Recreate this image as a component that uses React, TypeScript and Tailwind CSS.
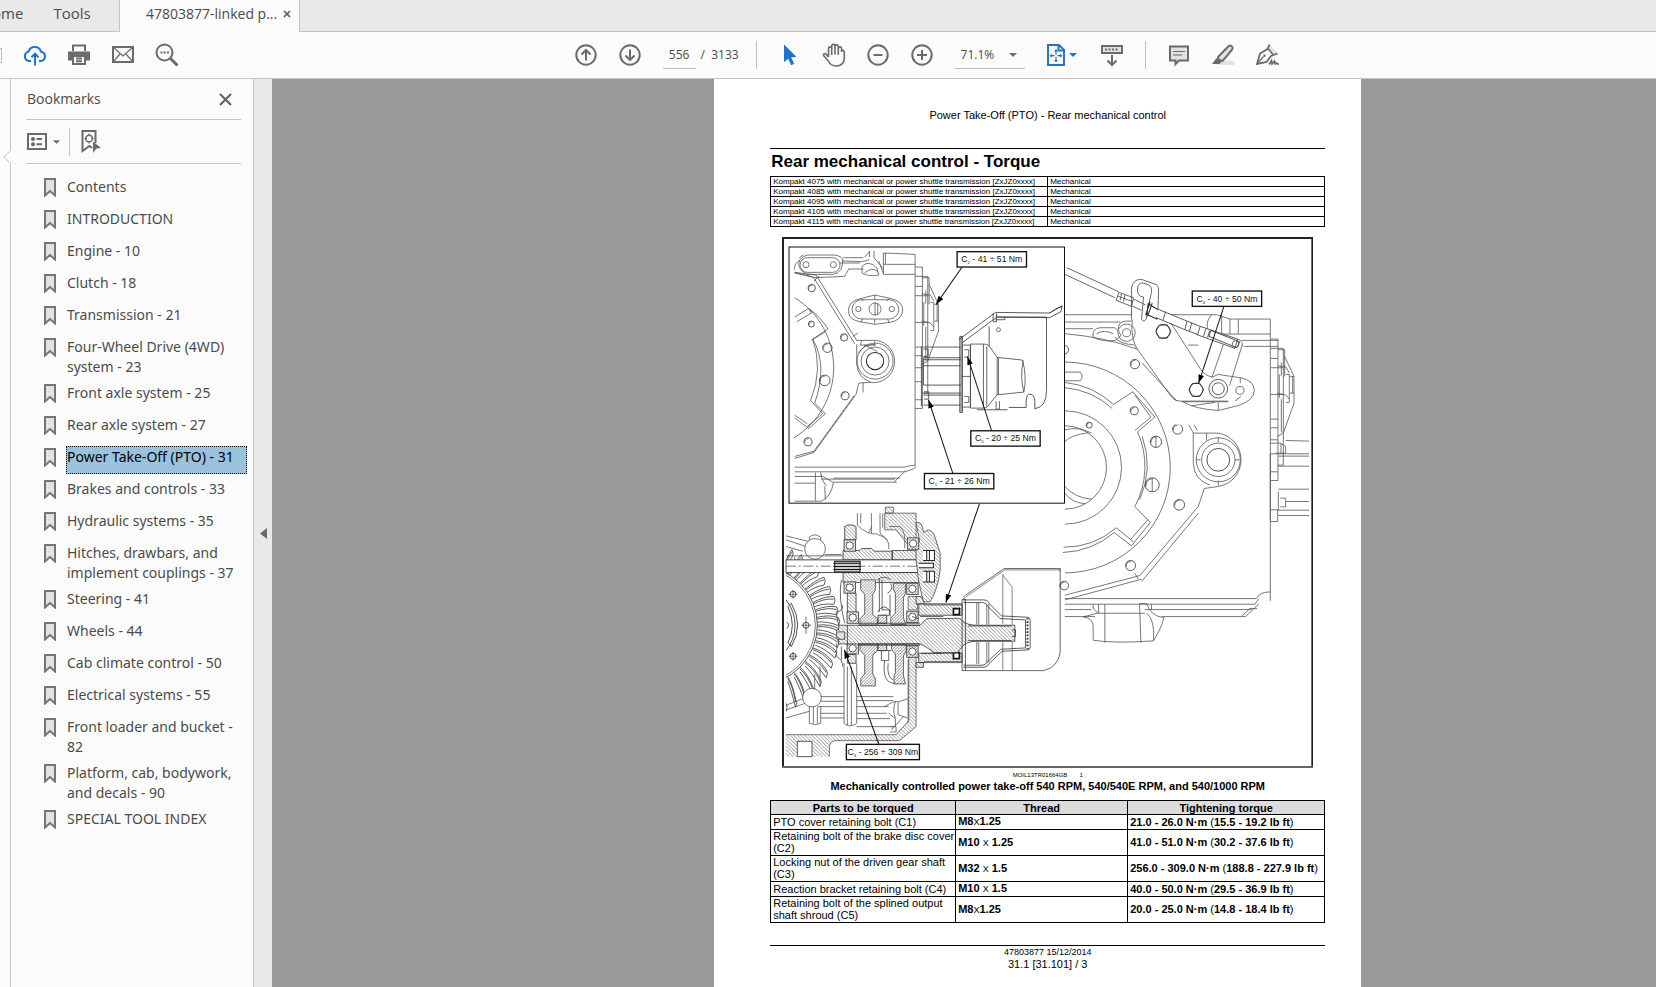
import { useState } from "react";
import type { ReactNode } from "react";

const bookmarks = [
  "Contents",
  "INTRODUCTION",
  "Engine - 10",
  "Clutch - 18",
  "Transmission - 21",
  "Four-Wheel Drive (4WD) system - 23",
  "Front axle system - 25",
  "Rear axle system - 27",
  "Power Take-Off (PTO) - 31",
  "Brakes and controls - 33",
  "Hydraulic systems - 35",
  "Hitches, drawbars, and implement couplings - 37",
  "Steering - 41",
  "Wheels - 44",
  "Cab climate control - 50",
  "Electrical systems - 55",
  "Front loader and bucket - 82",
  "Platform, cab, bodywork, and decals - 90",
  "SPECIAL TOOL INDEX",
];

const models = ["4075", "4085", "4095", "4105", "4115"];

const torques = [
  { part: "PTO cover retaining bolt (C1)", thread: ["M8", "1.25"], nm: "21.0 - 26.0 N·m", lb: "15.5 - 19.2 lb ft" },
  { part: "Retaining bolt of the brake disc cover (C2)", thread: ["M10 ", " 1.25"], nm: "41.0 - 51.0 N·m", lb: "30.2 - 37.6 lb ft" },
  { part: "Locking nut of the driven gear shaft (C3)", thread: ["M32 ", " 1.5"], nm: "256.0 - 309.0 N·m", lb: "188.8 - 227.9 lb ft" },
  { part: "Reaction bracket retaining bolt (C4)", thread: ["M10 ", " 1.5"], nm: "40.0 - 50.0 N·m", lb: "29.5 - 36.9 lb ft" },
  { part: "Retaining bolt of the splined output shaft shroud (C5)", thread: ["M8", "1.25"], nm: "20.0 - 25.0 N·m", lb: "14.8 - 18.4 lb ft" },
];

function IconButton({ label, children }: { label: string; children: ReactNode }) {
  return (
    <button type="button" aria-label={label} className="flex h-6 w-[22px] shrink-0 items-center justify-center text-[#6b6b6b]">
      <svg viewBox="0 0 24 24" className="h-6 w-6 shrink-0" fill="none" stroke="currentColor" strokeWidth="2">
        {children}
      </svg>
    </button>
  );
}

function Caret({ className }: { className: string }) {
  return (
    <svg viewBox="0 0 8 4" className={className} fill="currentColor">
      <path d="M0 0h8L4 4z" />
    </svg>
  );
}

function BookmarkGlyph() {
  return (
    <svg viewBox="0 0 12 19" className="h-[19px] w-3 shrink-0" fill="#e2e2e2" stroke="#757575" strokeWidth="2">
      <path d="M1 1h10v16.5L6 13l-5 4.500z" />
    </svg>
  );
}

function TabBar() {
  return (
    <div className="flex h-8 shrink-0 bg-[#e9e9e9] text-[15px] text-[#4b4b4b]">
      <nav className="flex h-full w-[120px] shrink-0 items-center gap-[30px] overflow-hidden border-r border-b border-[#c4c4c4] pb-1">
        <a href="#home" className="-ml-[19px]">Home</a>
        <a href="#tools">Tools</a>
      </nav>
      <div className="flex w-[179px] shrink-0 items-center justify-between bg-[#fbfbfb] pr-2 pb-1 pl-[26px] text-sm">
        <a href="#document" className="whitespace-nowrap">47803877-linked p...</a>
        <button type="button" aria-label="Close tab">
          <svg viewBox="0 0 8 8" className="h-2 w-2" stroke="#5f5f5f" strokeWidth="1.700">
            <path d="M1 1l6 6M7 1L1 7" />
          </svg>
        </button>
      </div>
      <div className="flex-1 border-b border-l border-[#c4c4c4]" />
    </div>
  );
}

function Toolbar() {
  const [page, setPage] = useState("556");

  return (
    <div className="flex h-[47px] shrink-0 items-center border-b border-[#c4c4c4] bg-[#fbfbfb] text-xs text-[#4b4b4b]">
      <div className="flex flex-[41] items-center gap-[22px]">
        <span className="h-[15px] w-[2px] border border-l-0 border-[#bdbdbd]" />
        <IconButton label="Upload">
          <g stroke="#1f74c9">
            <path d="M8 18H6.200A4.800 4.800 0 0 1 5.500 8.600 6.500 6.500 0 0 1 18 8.700a4.700 4.700 0 0 1-.2 9.300H16" />
            <path d="M12 22.500V11M8.500 14.200L12 10.700l3.500 3.500" />
          </g>
        </IconButton>
        <IconButton label="Print">
          <path d="M6 8V2.500h12V8" />
          <path d="M1 8.500h22v9H18v-4H6v4H1z" fill="currentColor" stroke="none" />
          <path d="M6 13v8h12v-8zM9 15.500h6M9 18.200h6" />
        </IconButton>
        <IconButton label="Send by email">
          <path d="M2 4h20v15H2z" />
          <path d="M2.500 4.500L12 13l9.500-8.500M2.500 18.500L9 11M21.500 18.500L15 11" strokeWidth="1.200" />
        </IconButton>
        <IconButton label="Find">
          <circle cx="9.500" cy="9.500" r="8" />
          <path d="M15.500 15.500L22.500 22.500" strokeWidth="3" />
          <path d="M5.500 9.500h2M8.700 9.500h2M12 9.500h2" />
        </IconButton>
      </div>

      <div className="flex shrink-0 items-center gap-[22px]">
        <IconButton label="Previous page">
          <circle cx="12" cy="12" r="9.700" />
          <path d="M12 17.500V7M7.500 11.500L12 7l4.500 4.500" />
        </IconButton>
        <IconButton label="Next page">
          <circle cx="12" cy="12" r="9.700" />
          <path d="M12 6.500V17M7.500 12.500L12 17l4.500-4.500" />
        </IconButton>
        <div className="flex w-[71px] items-center gap-[5px] whitespace-nowrap">
          <input
            aria-label="Page number"
            value={page}
            onChange={(e) => setPage(e.target.value)}
            className="h-7 w-[33px] shrink-0 border-b border-[#bdbdbd] bg-transparent text-center outline-none"
          />
          <span>/&nbsp; 3133</span>
        </div>
        <span className="h-7 w-px bg-[#bdbdbd]" />
        <IconButton label="Select">
          <path d="M6 1.500v17.800l4.200-3.600 3 6.500 3-1.400-3-6.200 5.200-.8z" fill="#1f74c9" stroke="none" />
        </IconButton>
        <IconButton label="Pan">
          <path
            strokeWidth="1.600"
            strokeLinejoin="round"
            d="M6.500 14V5.500a1.500 1.500 0 0 1 3.200 0V12M9.700 5.500V3a1.600 1.600 0 0 1 3.300 0v8.500M13 3.500a1.600 1.600 0 0 1 3.300 0V12M16.300 5.500a1.600 1.600 0 0 1 3.300 0V9M19.600 8a1.500 1.500 0 0 1 2.700.8V15c0 5-3.500 8-8 8-4 0-6.500-2-8-5L1.600 12.500c-.6-1.600 1.500-2.500 2.600-1.200L6.500 14"
          />
        </IconButton>
        <IconButton label="Zoom out">
          <circle cx="12" cy="12" r="9.700" />
          <path d="M7.500 12h9" />
        </IconButton>
        <IconButton label="Zoom in">
          <circle cx="12" cy="12" r="9.700" />
          <path d="M7 12h10M12 7v10" />
        </IconButton>
        <div className="relative w-[70px]">
          <select aria-label="Zoom level" className="h-7 w-full appearance-none border-b border-[#bdbdbd] bg-transparent pl-[6px] outline-none">
            <option>71.1%</option>
            <option>100%</option>
          </select>
          <Caret className="pointer-events-none absolute top-3 right-2 h-1 w-2 text-[#6b6b6b]" />
        </div>
        <button type="button" aria-label="Fit page" className="flex w-8 items-center gap-1 text-[#1f74c9]">
          <svg viewBox="0 0 18 22" className="h-[22px] w-[18px]" fill="none" stroke="currentColor" strokeWidth="2">
            <path d="M1 1h11l5 5v15H1z" />
            <path d="M11.500 1v5.500H17" />
            <path d="M9 6.500v4M9 13v4M3.500 11.700h4M10.500 11.700h4" strokeWidth="1.200" />
            <path d="M9 5l-2 2.500h4zM9 18.500L7 16h4zM2.500 11.700L5 9.700v4zM15.500 11.700l-2.500-2v4z" fill="currentColor" stroke="none" />
          </svg>
          <Caret className="h-1 w-2" />
        </button>
        <IconButton label="Scrolling mode">
          <path d="M2 3h20v7H2z" fill="#e2e2e2" />
          <path d="M5 6.500h2M8.500 6.500h2M12 6.500h2M15.500 6.500h2" />
          <path d="M12 12v10M7.500 17.500L12 22l4.500-4.500" />
        </IconButton>
        <span className="h-7 w-px bg-[#bdbdbd]" />
        <IconButton label="Comment">
          <path d="M3 3.500h18v14h-9L8.500 21v-3.500H3z" fill="#e2e2e2" />
          <path d="M6 8.500h12M6 12h9" strokeWidth="1.200" />
        </IconButton>
        <IconButton label="Highlight">
          <path d="M9 18h14v4H6z" fill="#e2e2e2" stroke="none" />
          <path d="M7 14L17.500 3.300c1.500-1.500 4.500-.5 4 2.200-.1.700-.4 1.100-.8 1.600L12 17.500c-2 1-5.500-1-5-3.500z" fill="#e2e2e2" />
          <path d="M5.500 15l5 4-2 2H1z" fill="currentColor" stroke="none" />
        </IconButton>
        <IconButton label="Sign">
          <path d="M13 6l2-4 7.500 8-4.500 2z" fill="#e2e2e2" stroke="none" />
          <path d="M14.500 1.500l-2 4.500L5 10.500 2 21l9.500-2 4.500-6 6.500-2.500" strokeWidth="1.800" />
          <path d="M13 5.500l5 6" strokeWidth="1.600" />
          <path d="M2 21l6.500-7.500" strokeWidth="1.200" />
          <circle cx="9.500" cy="12.800" r="1.200" fill="currentColor" stroke="none" />
          <path d="M14 21.500l2.500-4 .5 3.500 2.500-3 .5 3 1.500-1 1 1h1.500" strokeWidth="1.600" />
        </IconButton>
      </div>
      <div className="flex-[27]" />
    </div>
  );
}

function Sidebar() {
  const [selected, setSelected] = useState(8);

  return (
    <div className="flex shrink-0 bg-[#fbfbfb] text-sm text-[#4b4b4b]">
      <div className="w-[10px] pt-[71px]">
        <svg viewBox="0 0 9 14" className="relative left-[3px] h-[14px] w-[9px]" fill="#fbfbfb" stroke="#c4c4c4">
          <path d="M8 0L1 7l7 7" />
        </svg>
      </div>
      <aside className="w-[244px] border-x border-[#c4c4c4] pl-[15px]">
        <div className="mr-3 flex h-[41px] items-center justify-between border-b border-[#c4c4c4] pr-[9px] pl-px">
          <h2>Bookmarks</h2>
          <button type="button" aria-label="Close bookmarks">
            <svg viewBox="0 0 13 13" className="h-[13px] w-[13px]" stroke="#5f5f5f" strokeWidth="2">
              <path d="M1 1l11 11M12 1L1 12" />
            </svg>
          </button>
        </div>
        <div className="mr-3 flex h-11 items-center border-b border-[#c4c4c4] pl-px">
          <button type="button" aria-label="Options" className="flex w-[42px] items-center gap-[6px] text-[#6b6b6b]">
            <svg viewBox="0 0 20 17" className="h-[17px] w-5" fill="none" stroke="currentColor" strokeWidth="2">
              <path d="M1 1h18v15H1z" />
              <path d="M9.500 6H15M9.500 11.200H15" />
              <circle cx="6" cy="6" r="2" fill="currentColor" stroke="none" />
              <circle cx="6" cy="11.200" r="2" fill="currentColor" stroke="none" />
            </svg>
            <Caret className="h-1 w-[7px]" />
          </button>
          <span className="h-7 w-px bg-[#c4c4c4]" />
          <button type="button" aria-label="Find current bookmark" className="ml-[11px] text-[#6b6b6b]">
            <svg viewBox="0 0 20 23" className="h-[23px] w-5" fill="none" stroke="currentColor" strokeWidth="2">
              <path d="M11 18l-2.500-2L1.500 21V1h13v12" />
              <circle cx="8" cy="8.500" r="3.300" strokeWidth="1.400" />
              <path d="M8 3.500v2.500M8 11v2.500M3.500 8.500H6M10.500 8.500H13" strokeWidth="1.200" />
              <path d="M12 11.500l8 6.500-4.500.5L12 23z" fill="currentColor" stroke="none" />
            </svg>
          </button>
        </div>
        <ul className="pt-[11px] pl-[18px] font-['Noto_Sans',sans-serif]">
          {bookmarks.map((name, i) => (
            <li key={name} className="flex min-h-8 items-start gap-[10px] pt-[2px]">
              <span className="pt-px">
                <BookmarkGlyph />
              </span>
              <button
                type="button"
                onClick={() => setSelected(i)}
                className={
                  i === selected
                    ? "-mt-px w-[181px] border border-dotted border-black bg-[#9bc2dd] pb-[6px] text-left leading-5 whitespace-nowrap text-black"
                    : "w-[180px] border-x border-transparent pb-1 text-left leading-5"
                }
              >
                {name}
              </button>
            </li>
          ))}
        </ul>
      </aside>
      <button type="button" aria-label="Collapse panel" className="flex w-[18px] items-center justify-center bg-[#e9e9e9]">
        <svg viewBox="0 0 7 11" className="h-[11px] w-[7px]" fill="#6b6b6b">
          <path d="M7 0v11L0 5.500z" />
        </svg>
      </button>
    </div>
  );
}

function Callout({ x, y, w, sub, text }: { x: number; y: number; w: number; sub: string; text: string }) {
  return (
    <g>
      <rect x={x} y={y} width={w} height="46" fill="#fff" stroke="#111" strokeWidth="4" />
      <text x={x + w / 2} y={y + 32} textAnchor="middle" fontSize="26" fill="#111" stroke="none">
        C
        <tspan fontSize="13" dy="6">{sub}</tspan>
        <tspan dy="-6"> - {text}</tspan>
      </text>
    </g>
  );
}

function Holes({ at }: { at: number[][] }) {
  return (
    <>
      {at.map(([x, y, r]) => (
        <g key={`${x}-${y}`}>
          <circle cx={x} cy={y} r={r} stroke="#333" />
          <path d={`M${x - r + 3} ${y + 3}a${r - 3} ${r - 3} 0 0 1 ${r - 2} ${-r}`} />
        </g>
      ))}
    </>
  );
}

function Bearing({ x, y }: { x: number; y: number }) {
  return (
    <g>
      <rect x={x} y={y} width="34" height="34" fill="url(#hatchDark)" stroke="#333" />
      <circle cx={x + 17} cy={y + 17} r="11" fill="#fff" stroke="#333" />
    </g>
  );
}

// side cover with the bolts, used on the housing and again in the inset
function SideCover() {
  return (
    <g>
      <path d="M0 60h22v424H0M22 88h16v350H22M0 88h22M0 118h22M0 146h38M0 226h38M0 300h22M0 326h22M0 362h22M0 404h22M0 458h22" />
      <path d="M22 92h20v20l28 60v80l-32 90-18 10M42 112v60M46 166h10v84H46M26 166v70M32 130v40M32 240v100M58 172h12M58 222h12" />
      <path d="M20 140l26 4 10 18M20 222l26 6 10 12M66 172v50" />
    </g>
  );
}

// rear view of the gearbox housing with the reaction bracket
function Housing() {
  return (
    <g transform="translate(840 0)">
      <path d="M30 255h455l40 13h121v845M30 277h165M30 297h85M30 312q120 10 215 46M500 250v65M525 268v45M550 268v45M500 313h146M400 346h30M560 332h110M560 350h110M470 255q-20 20-10 50" />
      <path d="M115 322q-5-25 20-28h45q15 10 18 24l-16 14q-40 6-67-10zM125 312q22-14 50 0M190 300q0-26 24-26h28M180 322q10 20 60 24" />
      <path d="M30 397a316 316 0 0 1 0 632M30 543a170 170 0 0 1 0 340M30 588a125 125 0 0 1 0 250M30 600a112 112 0 0 1 80 10M30 635q20-20 70-26M30 770q30 34 80 38M30 790q20 28 60 32M30 427h46q12 13 0 26H30" />
      <path d="M30 458a255 255 0 0 1 146 66l58-38 66 76-52 44a255 255 0 0 1-8 224l46 48-56 70-52-40a255 255 0 0 1-154 60" />
      <path d="M30 474a240 240 0 0 1 142 62M240 496l48 66-48 40M262 620a255 255 0 0 1-8 190M236 936l-52-42a240 240 0 0 1-158 58M280 868l-52 60" />
      <path d="M240 350l125 165 50 95h75a81 81 0 0 1 0 160l-42 6-18 54-175 207L30 1096M252 345l123 162 52 95M415 610v90q2 50 50 66M490 752v16M455 632v-22M430 850l-170 205M240 1030l10 18M30 1110l230-62" />
      <circle cx="490" cy="690" r="66" />
      <circle cx="490" cy="690" r="50" />
      <circle cx="490" cy="690" r="34" stroke="#222" />
      <path d="M425 690h12M540 690h14M490 622v16" />
      <Holes at={[[240, 403, 14], [238, 543, 12], [368, 598, 15], [303, 636, 17], [292, 765, 21], [373, 825, 16], [103, 586, 9], [227, 1007, 15], [28, 1067, 13], [28, 360, 13]]} />
      <path d="M292 744v42M303 620v32" />
      {/* cable and bracket */}
      <path d="M230 270v-95q4-27 30-26l45 16q8 6 6 20v100l90 130h74l30-70q86-2 60 18l-38 122 24 12q50 8 48 42-2 30-50 46H368q-14 0-24-12L248 362q-24-32-18-92z" fill="#fff" stroke="none" />
      <path d="M36 114l155 72M30 134l150 70M192 188l44 16-6 26-46-18zM200 192l-4 20M210 196l-4 20M190 200l44 16M236 208l36 18M230 228l30 14" stroke="#444" />
      <path d="M230 270v-95q4-27 30-26l45 16q8 6 6 20l-2 60M248 178q0-18 16-18l18 6q10 6 8 22l-12 50-4 30q-8 12-14 0l6-66q-20-2-18-24z" stroke="#444" />
      <path d="M280 222l30 18-4 28-30-14zM286 216l-14 40M292 220l-14 40" stroke="#222" strokeWidth="3" />
      <path d="M308 238l88 36-6 26-86-36M332 246l-8 26M396 274l40 16-8 24-38-14M410 280l-6 24M436 290l112 38-8 28-116-42M452 298l-6 22M464 302l-6 22" fill="#fff" stroke="#333" />
      <path d="M468 302l86 34-8 18-84-34z" stroke="#222" />
      <circle cx="542" cy="343" r="10" />
      <circle cx="215" cy="309" r="12" />
      <circle cx="215" cy="309" r="26" />
      <path d="M232 270q-6 60 18 92l100 140q10 12 24 12h146M348 280l90 140M262 400l104 114M505 345l-34 98M562 345l-38 122M548 328q16 4 14 20M438 420q10 16 34 22l18-8 66 10q42 8 42 38t-50 46l-58 14q-70-4-106-26M380 516h140M556 444v16M490 518v24M410 528l70-10M540 514l18-14" />
      <circle cx="490" cy="477" r="28" stroke="#333" />
      <circle cx="490" cy="477" r="18" stroke="#333" />
      <circle cx="555" cy="482" r="12" />
      <path d="M303 305l10-19h24l11 19-11 20h-24zM402 480l10-19h23l11 19-11 20h-23z" stroke="#222" />
      <circle cx="325" cy="305" r="21" stroke="#222" />
      <circle cx="424" cy="480" r="20" stroke="#222" />
      <g transform="translate(647 268)">
        <SideCover />
      </g>
      <path d="M646 640h30l16 10v20h-30M692 632l70 2M670 672h92M670 679h92M670 709h92M670 778h92M670 785v55M646 840h24M646 875h22v-34h94M692 815h70M762 857h-92M678 640v30M646 672v200M676 805h16v26h-16" />
      {/* sump */}
      <path d="M30 1106h575q8-20 42-20M30 1123h570l12-16M30 1139h80M270 1139h320M30 1160h90M322 1160h250l40-38M560 1160l24-24h22M270 1150H130M115 1123q-4 16 16 26l-46 12q30 4 30 28v42q60 10 180 2 26-40 32-70-40-4-52-42h-22M131 1123v27M150 1123v115M254 1123l4 115M276 1150q24 20 20 82M290 1123v16" />
    </g>
  );
}

function Inset() {
  return (
    <g>
      <rect x="43" y="52" width="826" height="768" fill="#fff" stroke="#111" strokeWidth="3" />
      <path d="M60 120q-4-14 16-30 8-12 24-14h78q24 2 28 18l58 2 20-6M60 130l60 14 90-4 12-22h44M76 90q-14 24 20 44h80q30-6 28-44M86 76l-12 8M270 82l16-18M284 64v18M298 64v20l28 34M206 84h60M196 100h60M262 110q20-20 44 4l6 22q-30 6-50-6zM270 130q20-20 40-4M312 94l14 38M326 70l95 4M326 70v64h95M326 104h95M332 70v34M421 74v640" />
      <rect x="76" y="84" width="120" height="44" rx="22" />
      <circle cx="94" cy="105" r="9" />
      <circle cx="176" cy="105" r="9" />
      <path d="M60 128l64 8 122 196h60a62 62 0 0 1-20 126l-34 2-8 34-126 174-58 18M60 680l58-16 120-166M246 344v60q4 40 40 52M134 138l-16 16M234 320l16-10M262 332l-6 14h46M265 458v30M60 128l56 14 124 200M300 335v14M268 345l40 20" />
      <circle cx="301" cy="394" r="54" />
      <circle cx="301" cy="394" r="42" />
      <circle cx="301" cy="394" r="26" stroke="#222" strokeWidth="3" />
      <path d="M252 370q14-26 48-26" />
      <rect x="232" y="210" width="140" height="58" rx="29" />
      <path d="M222 250q-6-36 38-44l40-10 46 10q40 8 38 38-6 30-40 34l-44 6-44-8q-32-6-34-26zM300 196v14M300 268v14M258 206l8 8M344 206l-8 8M258 278l6-12M344 280l-6-12" />
      <circle cx="251" cy="238" r="8" />
      <circle cx="351" cy="238" r="8" />
      <circle cx="301" cy="238" r="18" />
      <path d="M301 218v40M309 220v36" />
      <path d="M60 204a246 246 0 0 1-2 420M60 262l42-26 8 14-44 26M102 236q34 24 58 62l-46 30q46 80 6 192l32 32-50 44-42-32M152 306l-42 26M114 328q32 90-6 184l36 40-46 38M60 556l38 26" />
      <Holes at={[[111, 175, 11], [110, 283, 9], [208, 323, 11], [158, 354, 14], [150, 452, 16], [211, 498, 12], [100, 636, 12]]} />
      <path d="M60 712h330q0-2 30-6M60 726h330l30-10M60 740h80M60 760h62M176 745h200M176 757h190M60 814h80q30-14 36-56l-38-22M138 728q0 20 16 40M122 728v84M150 770l2 40M358 757l34-34M140 748h220" />
      <g transform="translate(421 52)">
        <SideCover />
      </g>
      <path d="M446 352h112M446 384h112M446 390h112M446 408h112M446 466h112M446 490h112M446 496h112M446 526h112M446 358h14v22h-14M448 486h14v22h-14M440 350v180M446 384v82" stroke="#333" />
      <path d="M555 320h8v228h-8zM559 320v226" stroke="#333" />
      <path d="M552 330l110-82 162 2 38-22-4 18-34 18-158-2-102 76M655 250v26h10v-26M662 270h28v-8M643 290v60M665 262h150v220q0 50-35 55v-26q-4-20-18-18-10 4-8 40h-52M606 540h92M824 250q18-14 38-20" stroke="#333" />
      <circle cx="671" cy="300" r="6" />
      <path d="M563 346h24v186h-24M568 360h14v22h-14M568 500h14v18h-14M563 440h24M587 343h40q16 0 22 14l18 26v112l-20 24q-8 16-22 16h-38zM636 350v180M667 383l76 8q14 50 4 96l-80 8M671 384v110M745 392q-10 50 2 94M626 343v190M664 514v24h10v-24" stroke="#444" />
    </g>
  );
}

// section through the output shaft and gear set
function Section() {
  const teeth = Array.from({ length: 19 }, (_, i) => ((i - 9) * 7.500 * Math.PI) / 180);

  return (
    <g transform="translate(0 810)">
      <clipPath id="sectionEdge">
        <rect x="34" y="90" width="400" height="690" />
      </clipPath>
      <g clipPath="url(#sectionEdge)">
        <path d="M34 108l80 20M34 120l60 20M34 140l50 14M104 128v-16q16-14 34 0v16M34 616l56-22M34 630l58-20M34 654l70-20" />
        {teeth.map((a) => {
          const x = -50 + 178 * Math.cos(a);
          const y = 376 + 178 * Math.sin(a);
          const x2 = -50 + 242 * Math.cos(a + 0.040);
          const y2 = 376 + 250 * Math.sin(a + 0.040);
          return (
            <path
              key={a}
              d={`M${x} ${y}Q${(x + x2) / 2 + 4} ${(y + y2) / 2 - 10} ${x2} ${y2}q8 10 0 24Q${(x + x2) / 2} ${(y + y2) / 2 + 10} ${x} ${y + 14}M${x} ${y + 5}Q${(x + x2) / 2 + 4} ${(y + y2) / 2 - 4} ${x2} ${y2 + 8}`}
              stroke="#333"
            />
          );
        })}
        <circle cx="-50" cy="376" r="178" fill="#fff" stroke="#333" />
        <circle cx="-50" cy="376" r="172" />
        <path d="M34 300a120 120 0 0 1 0 152M40 320l10-10q38 66 0 130l-10-12q26-50 0-108M36 366q12 10 0 20" stroke="#222" />
        <path d="M42 283h26M55 270v26M80 376h30M94 350v52M42 469h26M55 456v26" />
      </g>
      <circle cx="55" cy="283" r="9" stroke="#222" />
      <circle cx="94" cy="376" r="9" stroke="#222" />
      <circle cx="55" cy="469" r="9" stroke="#222" />
      <circle cx="121" cy="147" r="31" fill="#fff" />
      <circle cx="112" cy="593" r="28" fill="#fff" />

      {/* casting */}
      <path d="M34 704h330l38-42V470h22v210l-50 42H180q-16 4-16 22v26H34z" fill="url(#hatch)" stroke="none" />
      <path d="M34 704h330l38-42V470M424 470v210l-50 42H180q-16 4-16 22v26" />
      <path d="M68 724h44v46H68z" fill="#fff" stroke="#333" />
      <path d="M330 40h94v100h-20l-40-50h-34zM332 22h24v18h-24z" fill="url(#hatch)" />
      <path d="M248 40v36q30 30 60 26M258 40v30M290 40v60M316 40v60l22 20M344 80h30q16 10 16 40v26M308 104q40 10 34 44M282 98l10-18M324 40v44" />
      <path d="M208 490v180q16 16 38 0V490M218 500v176M230 500v176M104 620v50q18 8 34 0v-50M116 620v50M128 620v50M138 590h70M138 604h70M130 620h78M138 640h70M138 654h70M246 590h110M246 602h110M246 620h96M246 640h90M246 656h100M246 680h110M330 620q30-20 40-14l30-10M342 640l20 16v24M350 690l36-40M362 604q-10 30 0 50M120 570v-46M136 500v60M400 480v190M346 680h18v16h-18M370 606v38l28 10" stroke="#555" />

      {/* upper shaft */}
      <path d="M205 152h50l6-6h30l8 8h54v26H205zM205 218h235v30H205zM352 152h90v28h-90z" fill="url(#hatch)" stroke="#333" />
      <path d="M34 180h405v38H34z" fill="#fff" stroke="#222" />
      <path d="M34 199h400" strokeDasharray="30 8 6 8" />
      <path d="M180 184h76v32h-76z" fill="#ccc" stroke="#111" strokeWidth="3" />
      <path d="M176 190h82M176 200h82M176 209h82" stroke="#111" strokeWidth="3" />
      <path d="M34 168h170M150 164h50M60 180v-10" />
      <path d="M210 80q16-10 34 0v40h-34z" fill="url(#hatch)" stroke="#333" />
      <path d="M424 68q20-4 22 30l14-8q16 2 22 26l14 44v50q-6 56-30 96h-20l-14-60-8-66V152l10-30z" fill="url(#hatch)" stroke="#444" />
      <path d="M445 152h34v30h-34M445 214h34v32h-34M432 190h44v14h-44M456 152v30M464 152v30M456 214v32M464 214v32" fill="#fff" stroke="#222" strokeWidth="3" />
      <Bearing x={208} y={120} />
      <Bearing x={398} y={114} />
      <Bearing x={208} y={246} />
      <Bearing x={396} y={250} />

      {/* gears */}
      <path d="M258 240h44v30l-8 14v60l14 12v20h-52v-20l14-14v-58l-12-14zM356 250h36v30l-6 14v60l8 20h-46v-20l14-14v-60l-6-10z" fill="url(#hatchDark)" stroke="#444" />
      <path d="M256 432h52v20l-14 14v56l8 14v22h-44v-22l12-14v-56l-14-14zM350 432h44v22l-8 14v58l6 26h-34v-24l4-10v-56l-12-14z" fill="url(#hatchDark)" stroke="#444" />
      <path d="M218 280h26v60h-26zM218 464h26v26h-26z" fill="url(#hatch)" stroke="#333" />
      <path d="M400 290h28v40h-28z" fill="url(#hatch)" />
      <path d="M308 240q20-16 40 0M314 236v100M322 240v90M308 336q20-30 40 0M338 280q20-10 10-30M320 330h24v16h-24M310 452h40M320 452v30h22v-30M330 480q-10 70 30 70M340 490q-4 44 16 50M200 240q-10 50 10 130M192 376l-8-40q20 0 20-20M186 430v40q18 10 18 30M200 440v40M346 350v-66" stroke="#444" />
      <path d="M310 346h26v24h-26zM310 428h26v24h-26z" fill="url(#hatchDark)" stroke="#222" />
      <Bearing x={217} y={336} />
      <Bearing x={396} y={334} />
      <Bearing x={217} y={428} />
      <Bearing x={396} y={438} />
      <path d="M432 312h130v34H432zM432 460h130v28H432zM424 290h16l10 22h-26zM424 488h22v14h-22z" fill="url(#hatch)" stroke="#333" />
      <path d="M448 314h112M448 486h112" stroke="#777" strokeWidth="5" />
      <path d="M536 326h18v18h-18zM536 458h18v18h-18z" fill="#fff" stroke="#111" strokeWidth="5" />

      {/* output shaft */}
      <path d="M192 376h244l20-20h80q20-4 26 6 14 14 44 14h114v48H606q-30 0-44 16l-14 18h-70l-26-18-16-8H192v-18h-6v-24h6z" fill="url(#hatch)" stroke="#333" />
      <path d="M250 370h186M250 376h186M250 432h186M250 436h186M432 356l-20-6M436 350h70M440 460h60" stroke="#333" />
      <path d="M190 396h20v22h-20M218 376v60M580 378h130M580 422h130M712 390h10v20h-10" stroke="#333" />

      {/* shroud */}
      <path d="M572 286l116-80h168v250q-6 46-50 56H572" stroke="#444" />
      <path d="M572 292l118-82h166M568 286v16M684 222v150M684 226l28 36v112M684 424v88M712 426v86M856 206v10" stroke="#666" />
      <path d="M562 298h10v214h-10zM566 300h60q14 0 18 12l36 36 78 4q8 0 8 10v80q0 8-8 8l-76 4-38 36q-6 12-16 12h-62M566 308h58q10 0 14 10l38 38 76 4v84l-74 4-42 40q-4 8-14 8h-56" stroke="#333" />
      <path d="M758 354v94" stroke="#333" strokeWidth="6" strokeDasharray="5 5" />
      <path d="M606 308v66M606 426v66M636 312v62M636 426v64M642 312v62M642 426v62M612 308v66M612 426v66" />
    </g>
  );
}

function TorqueDrawing() {
  return (
    <svg
      viewBox="22 22 1592 1592"
      role="img"
      aria-label="Rear mechanical control torque points"
      className="block h-auto w-full font-['Liberation_Sans',sans-serif]"
      fill="none"
      stroke="#555"
      strokeWidth="2.400"
    >
      <defs>
        <pattern id="hatch" width="11" height="11" patternUnits="userSpaceOnUse">
          <rect width="11" height="11" fill="#fff" stroke="none" />
          <path d="M-2 -2l15 15M-2 9l4 4M9 -2l4 4" stroke="#666" strokeWidth="2" />
        </pattern>
        <pattern id="hatchDark" width="9" height="9" patternUnits="userSpaceOnUse">
          <rect width="9" height="9" fill="#fff" stroke="none" />
          <path d="M-2 11L11 -2M-2 2l4-4M7 11l4-4" stroke="#555" strokeWidth="2" />
        </pattern>
        <marker id="tip" viewBox="0 0 24 16" refX="24" refY="8" markerWidth="26" markerHeight="17" markerUnits="userSpaceOnUse" orient="auto">
          <path d="M0 0l24 8-24 8z" fill="#000" stroke="none" />
        </marker>
      </defs>
      <Housing />
      <Section />
      <Inset />
      <path d="M25 1612V25h1587v1587" stroke="#222" strokeWidth="6" />
      <path d="M22 1611h1592" stroke="#666" strokeWidth="6" />
      <g stroke="#111" strokeWidth="3">
        <path d="M562 112L484 224" markerEnd="url(#tip)" />
        <path d="M650 602L578 380" markerEnd="url(#tip)" />
        <path d="M534 730L461 510" markerEnd="url(#tip)" />
        <path d="M1347 230L1271 460" markerEnd="url(#tip)" />
        <path d="M614 822L513 1118" markerEnd="url(#tip)" />
        <path d="M312 1542L209 1260" markerEnd="url(#tip)" />
      </g>
      <Callout x={547} y={66} w={208} sub="2" text="41 ÷ 51 Nm" />
      <Callout x={588} y={603} w={208} sub="5" text="20 ÷ 25 Nm" />
      <Callout x={449} y={731} w={208} sub="1" text="21 ÷ 26 Nm" />
      <Callout x={1252} y={184} w={208} sub="4" text="40 ÷ 50 Nm" />
      <Callout x={215} y={1543} w={219} sub="3" text="256 ÷ 309 Nm" />
    </svg>
  );
}

function ManualPage() {
  return (
    <article className="w-[647px] shrink-0 bg-white pt-[30px] pr-9 pl-14 font-['Liberation_Sans',sans-serif] text-[11px] leading-[13px] text-black">
      <header className="border-b border-black pb-[26px] text-center">Power Take-Off (PTO) - Rear mechanical control</header>
      <h1 className="pt-[3px] pb-1 pl-px text-[17px] leading-5 font-bold">Rear mechanical control - Torque</h1>

      <table className="w-full table-fixed border-collapse text-[8px] leading-[9px]">
        <tbody>
          {models.map((model) => (
            <tr key={model}>
              <td className="border border-black py-0 pl-[2px] whitespace-nowrap">
                Kompakt {model} with mechanical or power shuttle transmission [ZxJZ0xxxx]
              </td>
              <td className="border border-black py-0 pl-[2px]">Mechanical</td>
            </tr>
          ))}
        </tbody>
      </table>

      <figure className="pt-[10px]">
        <div className="px-3">
          <TorqueDrawing />
        </div>
        <div className="flex h-3 items-end justify-center gap-3 text-[6px] leading-[9px]">
          <span>MOIL13TR01664GB</span>
          <span>1</span>
        </div>
        <figcaption className="text-center font-bold">
          Mechanically controlled power take-off 540 RPM, 540/540E RPM, and 540/1000 RPM
        </figcaption>
      </figure>

      <table className="mt-[7px] w-full table-fixed border-collapse leading-3">
        <thead>
          <tr className="bg-[#dcdcdc]">
            <th className="w-[185px] border border-black p-0 pt-px">Parts to be torqued</th>
            <th className="w-[172px] border border-black p-0 pt-px">Thread</th>
            <th className="border border-black p-0 pt-px">Tightening torque</th>
          </tr>
        </thead>
        <tbody>
          {torques.map((row) => (
            <tr key={row.part}>
              <td className="border border-black p-0 pb-px pl-[2px]">{row.part}</td>
              <td className="border border-black p-0 pb-px pl-[2px] font-bold">
                {row.thread[0]}
                <span className="text-[9px] font-normal">X</span>
                {row.thread[1]}
              </td>
              <td className="border border-black p-0 pb-px pl-[2px] font-bold whitespace-nowrap">
                {row.nm} <span className="font-normal">(</span>
                {row.lb}
                <span className="font-normal">)</span>
              </td>
            </tr>
          ))}
        </tbody>
      </table>

      <footer className="mt-[22px] border-t border-black text-center">
        <p className="text-[9px] leading-3">47803877 15/12/2014</p>
        <p>31.1 [31.101] / 3</p>
      </footer>
    </article>
  );
}

export default function App() {
  return (
    <div className="flex h-screen flex-col overflow-hidden bg-[#fbfbfb] font-['Open_Sans','Noto_Sans',sans-serif]">
      <TabBar />
      <Toolbar />
      <div className="flex min-h-0 flex-1">
        <Sidebar />
        <main className="flex min-w-0 flex-1 overflow-hidden bg-[#999999]">
          <div className="flex-[3]" />
          <ManualPage />
          <div className="flex-[2]" />
        </main>
      </div>
    </div>
  );
}
